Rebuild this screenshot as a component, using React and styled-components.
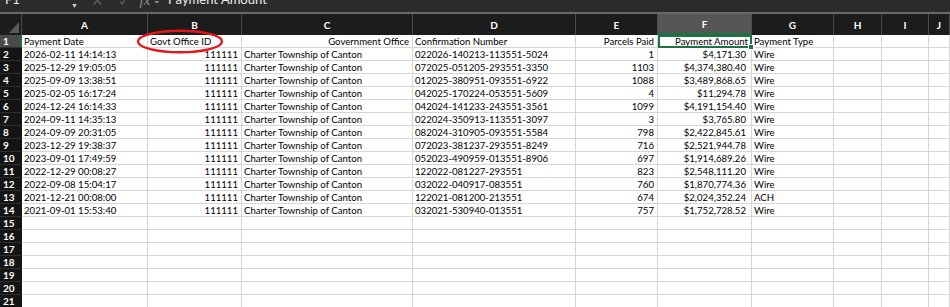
import React from "react";
import styled, { createGlobalStyle } from "styled-components";

const GlobalStyle = createGlobalStyle`
  html, body { margin: 0; padding: 0; background: #ffffff; overflow: hidden; }
  body { width: 950px; height: 307px; }
`;

const Page = styled.div`
  width: 950px;
  height: 307px;
  overflow: hidden;
  display: flex;
  flex-direction: column;
  background: #fff;
`;

const FormulaBar = styled.div`
  height: 12px;
  flex: 0 0 12px;
  background: #2b2b2b;
  border-bottom: 2px solid #6a6a6a;
  overflow: hidden;
  display: flex;
  align-items: flex-start;
  font-family: "Lato", "Liberation Sans", sans-serif;
  color: #e8e8e8;
`;

const NameBox = styled.div`
  width: 84px;
  height: 100%;
  display: flex;
  align-items: flex-start;
  justify-content: space-between;
  padding: 0 6px 0 5px;
  box-sizing: border-box;
  font-size: 13px;
  line-height: 16px;
  margin-top: -9px;
`;

const Tri = styled.span`
  font-size: 7px;
  line-height: 16px;
  margin-top: 6px;
  color: #d0d0d0;
`;

const BarIcon = styled.span`
  width: ${(p) => p.$w}px;
  display: inline-flex;
  justify-content: center;
  color: ${(p) => p.$c || "#5e5e5e"};
  font-size: ${(p) => p.$fs || 14}px;
  line-height: 16px;
  margin-top: -8px;
  font-style: ${(p) => (p.$italic ? "italic" : "normal")};
  font-family: ${(p) => (p.$serif ? '"Liberation Serif", serif' : "inherit")};
`;

const FormulaText = styled.div`
  margin-left: 6px;
  font-size: 13px;
  line-height: 16px;
  margin-top: -9px;
  color: #ececec;
`;

const SheetWrap = styled.div`
  position: relative;
  flex: 1;
`;

const Grid = styled.div`
  display: grid;
  grid-template-columns: 22px 126px 94px 171px 163px 82px 94px 82px 48px 47px 1fr;
  grid-template-rows: 21px;
  grid-auto-rows: 13px;
  font-family: "Lato", "Liberation Sans", sans-serif;
`;

const Corner = styled.div`
  background: #1c1c1c;
  border-right: 1px solid #4a4a4a;
  position: relative;
  box-sizing: border-box;
  &::after {
    content: "";
    position: absolute;
    right: 2px;
    bottom: 2px;
    width: 0;
    height: 0;
    border-left: 10px solid transparent;
    border-bottom: 11px solid #5a5a5a;
  }
`;

const ColHead = styled.div`
  background: ${(p) => (p.$active ? "#565656" : "#1c1c1c")};
  color: #ffffff;
  font-weight: 700;
  font-size: 10px;
  display: flex;
  align-items: center;
  justify-content: center;
  border-right: 1px solid #4a4a4a;
  box-sizing: border-box;
  ${(p) => (p.$active ? "border-bottom: 2px solid #1e7145;" : "")}
`;

const RowHead = styled.div`
  background: ${(p) => (p.$active ? "#4a4a4a" : "#141414")};
  color: #ffffff;
  font-weight: 700;
  font-size: 10px;
  display: flex;
  align-items: center;
  padding-left: 3px;
  box-sizing: border-box;
  border-bottom: 1px solid #2e2e2e;
  ${(p) => (p.$active ? "border-right: 2px solid #1e7145;" : "")}
`;

const Cell = styled.div`
  position: relative;
  box-sizing: border-box;
  border-right: 1px solid #d6d6d6;
  border-bottom: 1px solid #d6d6d6;
  font-size: 9.6px;
  color: #000;
  white-space: nowrap;
  overflow: visible;
  display: flex;
  align-items: center;
  justify-content: ${(p) => (p.$right ? "flex-end" : "flex-start")};
  padding: 0 ${(p) => (p.$pr != null ? p.$pr : 3)}px 0 2px;
  ${(p) =>
    p.$selected
      ? `
    outline: 2px solid #1e7145;
    outline-offset: -2px;
    z-index: 2;
    &::after {
      content: "";
      position: absolute;
      right: -3px;
      bottom: -3px;
      width: 4px;
      height: 4px;
      background: #1e7145;
      border: 1px solid #fff;
    }
  `
      : ""}
`;

const Annotation = styled.svg`
  position: absolute;
  left: 136px;
  top: 15px;
  pointer-events: none;
  z-index: 3;
`;

const cols = ["A", "B", "C", "D", "E", "F", "G", "H", "I", "J"];

const header = [
  { t: "Payment Date" },
  { t: "Govt Office ID" },
  { t: "Government Office", r: true },
  { t: "Confirmation Number" },
  { t: "Parcels Paid", r: true },
  { t: "Payment Amount", r: true, sel: true },
  { t: "Payment Type" },
];

const data = [
  ["2026-02-11 14:14:13", "022026-140213-113551-5024", "1", "$4,171.30", "Wire"],
  ["2025-12-29 19:05:05", "072025-051205-293551-3350", "1103", "$4,374,380.40", "Wire"],
  ["2025-09-09 13:38:51", "012025-380951-093551-6922", "1088", "$3,489,868.65", "Wire"],
  ["2025-02-05 16:17:24", "042025-170224-053551-5609", "4", "$11,294.78", "Wire"],
  ["2024-12-24 16:14:33", "042024-141233-243551-3561", "1099", "$4,191,154.40", "Wire"],
  ["2024-09-11 14:35:13", "022024-350913-113551-3097", "3", "$3,765.80", "Wire"],
  ["2024-09-09 20:31:05", "082024-310905-093551-5584", "798", "$2,422,845.61", "Wire"],
  ["2023-12-29 19:38:37", "072023-381237-293551-8249", "716", "$2,521,944.78", "Wire"],
  ["2023-09-01 17:49:59", "052023-490959-013551-8906", "697", "$1,914,689.26", "Wire"],
  ["2022-12-29 00:08:27", "122022-081227-293551", "823", "$2,548,111.20", "Wire"],
  ["2022-09-08 15:04:17", "032022-040917-083551", "760", "$1,870,774.36", "Wire"],
  ["2021-12-21 00:08:00", "122021-081200-213551", "674", "$2,024,352.24", "ACH"],
  ["2021-09-01 15:53:40", "032021-530940-013551", "757", "$1,752,728.52", "Wire"],
];

const TOTAL_ROWS = 22;

export default function App() {
  const rows = [];
  for (let r = 1; r <= TOTAL_ROWS; r++) {
    const cells = [];
    if (r === 1) {
      header.forEach((h, i) =>
        cells.push(
          <Cell key={i} $right={h.r} $selected={h.sel}>
            {h.t}
          </Cell>
        )
      );
      cells.push(<Cell key="h" />, <Cell key="i" />, <Cell key="j" />);
    } else if (r - 2 < data.length) {
      const d = data[r - 2];
      cells.push(
        <Cell key="a">{d[0]}</Cell>,
        <Cell key="b" $right>111111</Cell>,
        <Cell key="c">Charter Township of Canton</Cell>,
        <Cell key="d">{d[1]}</Cell>,
        <Cell key="e" $right>{d[2]}</Cell>,
        <Cell key="f" $right $pr={5}>{d[3]}</Cell>,
        <Cell key="g">{d[4]}</Cell>,
        <Cell key="h" />,
        <Cell key="i" />,
        <Cell key="j" />
      );
    } else {
      for (let c = 0; c < 10; c++) cells.push(<Cell key={c} />);
    }
    rows.push(
      <React.Fragment key={r}>
        <RowHead $active={r === 1}>{r}</RowHead>
        {cells}
      </React.Fragment>
    );
  }

  return (
    <Page>
      <GlobalStyle />
      <FormulaBar>
        <NameBox>
          <span>F1</span>
          <Tri>▼</Tri>
        </NameBox>
        <BarIcon $w={26} $fs={15}>✕</BarIcon>
        <BarIcon $w={28} $fs={15}>✓</BarIcon>
        <BarIcon $w={14} $fs={15} $italic $serif $c="#8a8a8a">fx</BarIcon>
        <BarIcon $w={10} $fs={9} $c="#cfcfcf">⌄</BarIcon>
        <FormulaText>Payment Amount</FormulaText>
      </FormulaBar>
      <SheetWrap>
        <Grid>
          <Corner />
          {cols.map((c) => (
            <ColHead key={c} $active={c === "F"}>
              {c}
            </ColHead>
          ))}
          {rows}
        </Grid>
        <Annotation width="88" height="26" viewBox="0 0 88 26">
          <ellipse cx="44" cy="12.5" rx="42" ry="10.8" fill="none" stroke="#e4161c" strokeWidth="2.4" />
        </Annotation>
      </SheetWrap>
    </Page>
  );
}
